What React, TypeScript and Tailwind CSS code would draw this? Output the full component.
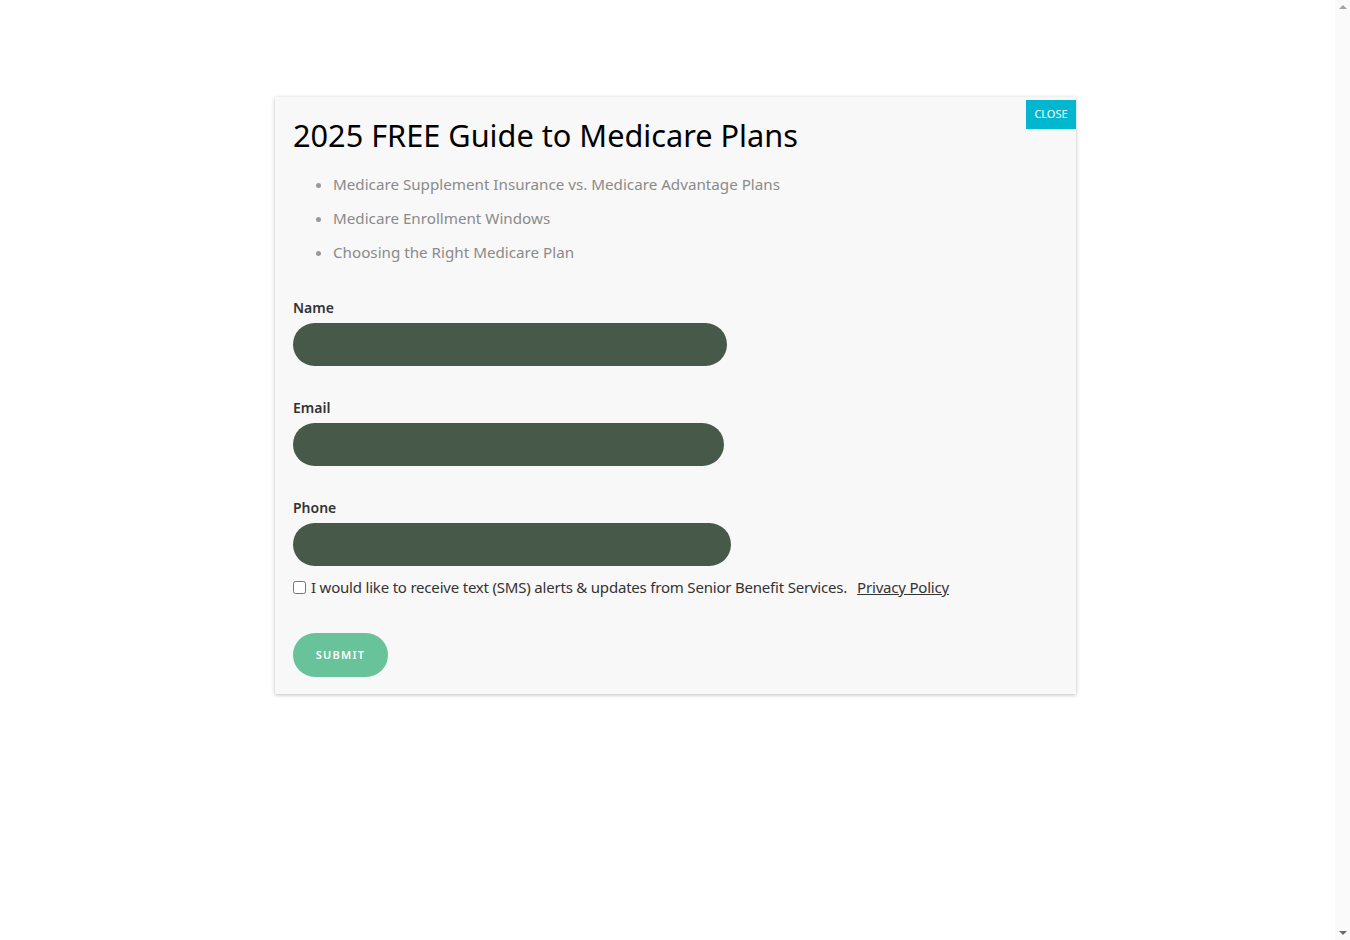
import React from "react";

export default function App() {
  const font = { fontFamily: '"Noto Sans", "Open Sans", sans-serif' };
  return (
    <div className="flex h-[940px] w-full bg-white" style={font}>
      <div className="flex-1 pt-[97px] pl-[275px]">
        <div className="relative w-[801px] bg-[#f8f8f8] shadow-[0_1px_4px_rgba(0,0,0,0.25)] pl-[18px] pr-[18px] pt-[18px] pb-[17px]">
          <button className="absolute right-0 top-[3px] h-[29px] w-[50px] bg-[#00b7cf] text-[11px] text-white">
            CLOSE
          </button>
          <h1 className="text-[30.7px] leading-[40px] text-black">2025 FREE Guide to Medicare Plans</h1>
          <ul className="mt-[12px] list-disc pl-[40px] text-[15.2px] leading-[34px] text-[#8a8a8a] marker:text-[#999]">
            <li>Medicare Supplement Insurance vs. Medicare Advantage Plans</li>
            <li>Medicare Enrollment Windows</li>
            <li>Choosing the Right Medicare Plan</li>
          </ul>
          <div className="mt-[28px] flex flex-col">
            <label className="text-[14px] font-semibold leading-[22px] text-[#333]">Name</label>
            <div className="mt-[4px] h-[43px] w-[434px] rounded-full bg-[#475a4a]" />
            <label className="mt-[31px] text-[14px] font-semibold leading-[22px] text-[#333]">Email</label>
            <div className="mt-[4px] h-[43px] w-[431px] rounded-full bg-[#475a4a]" />
            <label className="mt-[31px] text-[14px] font-semibold leading-[22px] text-[#333]">Phone</label>
            <div className="mt-[4px] h-[43px] w-[438px] rounded-full bg-[#475a4a]" />
          </div>
          <div className="mt-[11px] flex items-center text-[15px] leading-[20px] text-[#333]">
            <input type="checkbox" className="m-0 h-[13px] w-[13px]" />
            <span className="ml-[5px] tracking-[-0.2px]">
              I would like to receive text (SMS) alerts &amp; updates from Senior Benefit Services.
            </span>
            <a className="ml-[10px] underline tracking-[-0.2px]">Privacy Policy</a>
          </div>
          <button className="mt-[36px] h-[44px] w-[95px] rounded-full bg-[#68c39a] text-[11px] font-semibold tracking-[1.2px] text-white">
            SUBMIT
          </button>
        </div>
      </div>
      <div className="flex w-[15px] flex-col items-center justify-between bg-[#fafafa] py-[5px]">
        <div className="h-0 w-0 border-x-[4px] border-b-[4px] border-x-transparent border-b-[#a3a3a3]" />
        <div className="h-0 w-0 border-x-[4px] border-t-[4px] border-x-transparent border-t-[#6b6b6b]" />
      </div>
    </div>
  );
}
